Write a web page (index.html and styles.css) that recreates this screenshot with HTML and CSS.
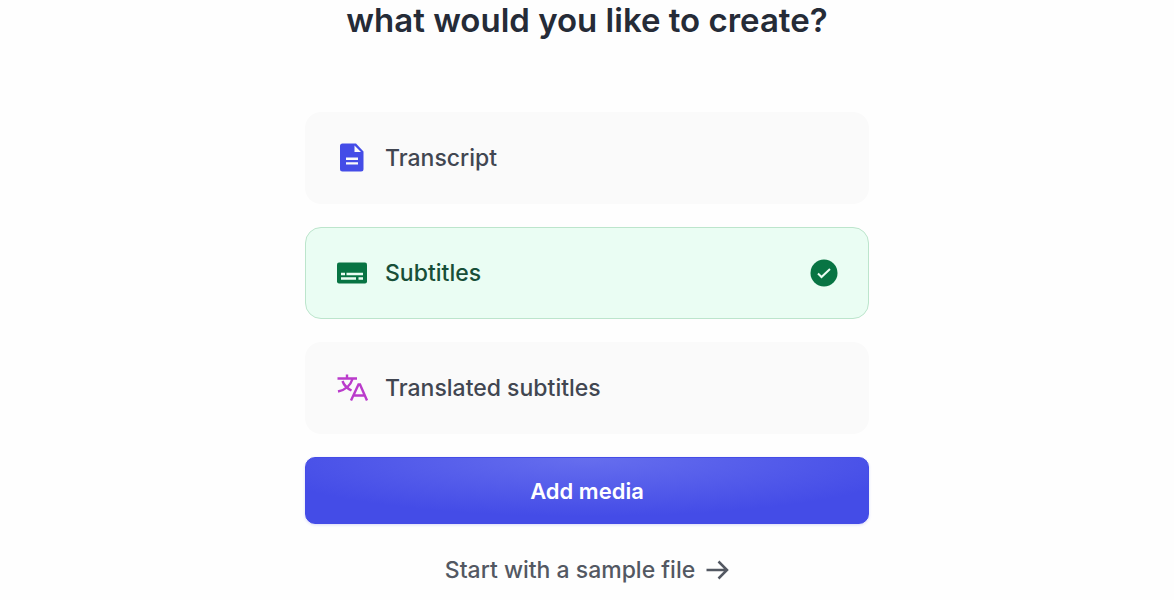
FILE: index.html
```html
<!DOCTYPE html>
<html lang="en">
<head>
    <meta charset="UTF-8">
    <meta name="viewport" content="width=device-width, initial-scale=1.0">
    <title>Create</title>
    <link rel="stylesheet" href="styles.css">
</head>
<body>
    <main class="create">
        <h1 class="title">what would you like to create?</h1>

        <form class="create-form">
            <div class="option">
                <input class="option-input" type="radio" name="output" id="transcript">
                <label class="option-card" for="transcript">
                    <svg class="option-icon icon-transcript" viewBox="0 0 32 32" aria-hidden="true">
                        <path fill="currentColor" fill-rule="evenodd" d="M6.500 1.500H20l7.500 8V27a2.500 2.500 0 0 1-2.500 2.500H6.500A2.500 2.500 0 0 1 4 27V4a2.500 2.500 0 0 1 2.500-2.500zM18.500 3.500v6.500H25zM10 15.500v2.400h12v-2.400zm0 4.700v2.400h12v-2.400z"/>
                    </svg>
                    <span class="option-label">Transcript</span>
                    <svg class="option-check" viewBox="0 0 28 28" aria-hidden="true">
                        <circle cx="14" cy="14" r="13.500"/>
                        <path d="M8 14.500l3.500 3.500 8.500-8"/>
                    </svg>
                </label>
            </div>

            <div class="option">
                <input class="option-input" type="radio" name="output" id="subtitles" checked>
                <label class="option-card" for="subtitles">
                    <svg class="option-icon icon-subtitles" viewBox="0 0 32 32" aria-hidden="true">
                        <rect x="1" y="5.500" width="30" height="21" rx="2" fill="currentColor"/>
                        <path class="caption-lines" d="M5 17h4M10.500 17H27M5 21.500h15M22.500 21.500H27"/>
                    </svg>
                    <span class="option-label">Subtitles</span>
                    <svg class="option-check" viewBox="0 0 28 28" aria-hidden="true">
                        <circle cx="14" cy="14" r="13.500"/>
                        <path d="M8 14.500l3.500 3.500 8.500-8"/>
                    </svg>
                </label>
            </div>

            <div class="option">
                <input class="option-input" type="radio" name="output" id="translated">
                <label class="option-card" for="translated">
                    <svg class="option-icon icon-translated" viewBox="0 0 32 32" aria-hidden="true">
                        <path d="M1.500 6.500H21M11 2.500v4M6.500 9c1.500 4.500 5 7.500 9 9.500M16.500 7C14.500 13.500 9 18 2 19.500"/>
                        <path d="M15 28.500L22.500 12.500h1.500l7 16M18 23.500h11"/>
                    </svg>
                    <span class="option-label">Translated subtitles</span>
                    <svg class="option-check" viewBox="0 0 28 28" aria-hidden="true">
                        <circle cx="14" cy="14" r="13.500"/>
                        <path d="M8 14.500l3.500 3.500 8.500-8"/>
                    </svg>
                </label>
            </div>

            <button class="add-button" type="button">Add media</button>
        </form>

        <a class="sample-link" href="#sample">
            Start with a sample file
            <svg class="sample-arrow" viewBox="0 0 24 24" aria-hidden="true">
                <path d="M1.500 12h20M13.500 3.500L22 12l-8.500 8.500"/>
            </svg>
        </a>
    </main>
</body>
</html>
```

FILE: styles.css
```css
:root {
    --primary: #444ce7;
    --primary-light: #666eee;
    --heading: #252b37;
    --text: #414651;
    --muted: #535862;
    --card: #fafafa;
    --green: #087443;
    --green-dark: #184f38;
    --green-bg: #eafdf3;
    --green-border: #bce5cc;
    --purple: #ba3bcb;
}

* {
    margin: 0;
    padding: 0;
    box-sizing: border-box;
}

body {
    background-color: #fefefe;
    color: var(--text);
    font-family: Inter, sans-serif;
    font-size: 23px;
    font-weight: 500;
    line-height: 32px;
}

.create {
    display: flex;
    flex-direction: column;
    align-items: center;
    padding: 0 20px 12px;
}

.title {
    margin-bottom: 72px;
    color: var(--heading);
    font-size: 33px;
    font-weight: 600;
    line-height: 40px;
    text-align: center;
}

.create-form {
    display: flex;
    flex-direction: column;
    gap: 23px;
    width: 100%;
    max-width: 564px;
}

.option {
    position: relative;
}

/* The card is the visible control, the radio stays focusable */
.option-input {
    position: absolute;
    inset: 0;
    opacity: 0;
}

.option-card {
    display: flex;
    align-items: center;
    gap: 17px;
    padding: 29px 30px;
    border: 1px solid transparent;
    border-radius: 16px;
    background-color: var(--card);
    cursor: pointer;
}

.option-icon {
    flex: none;
    width: 32px;
    height: 32px;
}

.option-label {
    flex: 1;
}

.icon-transcript {
    color: var(--primary);
}

.icon-subtitles {
    color: var(--green);
}

.caption-lines {
    stroke: var(--green-bg);
    stroke-width: 2.4;
}

.icon-translated {
    fill: none;
    stroke: var(--purple);
    stroke-width: 2.4;
}

.option-check {
    display: none;
    width: 28px;
    height: 28px;
    fill: var(--green);
}

.option-check path {
    fill: none;
    stroke: var(--green-bg);
    stroke-width: 2;
}

.option-input:checked + .option-card {
    border-color: var(--green-border);
    background-color: var(--green-bg);
    color: var(--green-dark);
}

.option-input:checked + .option-card .option-check {
    display: block;
}

.option-input:focus-visible + .option-card {
    outline: 2px solid var(--primary);
}

.add-button {
    padding: 17px 16px 16px;
    border: 1px solid var(--primary);
    border-radius: 10px;
    background: radial-gradient(ellipse 60% 90% at 50% 0, var(--primary-light), var(--primary));
    box-shadow: 0 1px 3px rgba(68, 76, 231, 0.2);
    color: #fff;
    font: inherit;
    font-size: 22px;
    font-weight: 600;
    cursor: pointer;
}

.sample-link {
    display: flex;
    align-items: center;
    gap: 10px;
    margin-top: 30px;
    color: var(--muted);
    text-decoration: none;
}

.sample-arrow {
    width: 24px;
    height: 24px;
    fill: none;
    stroke: currentColor;
    stroke-width: 2.5;
}
```
